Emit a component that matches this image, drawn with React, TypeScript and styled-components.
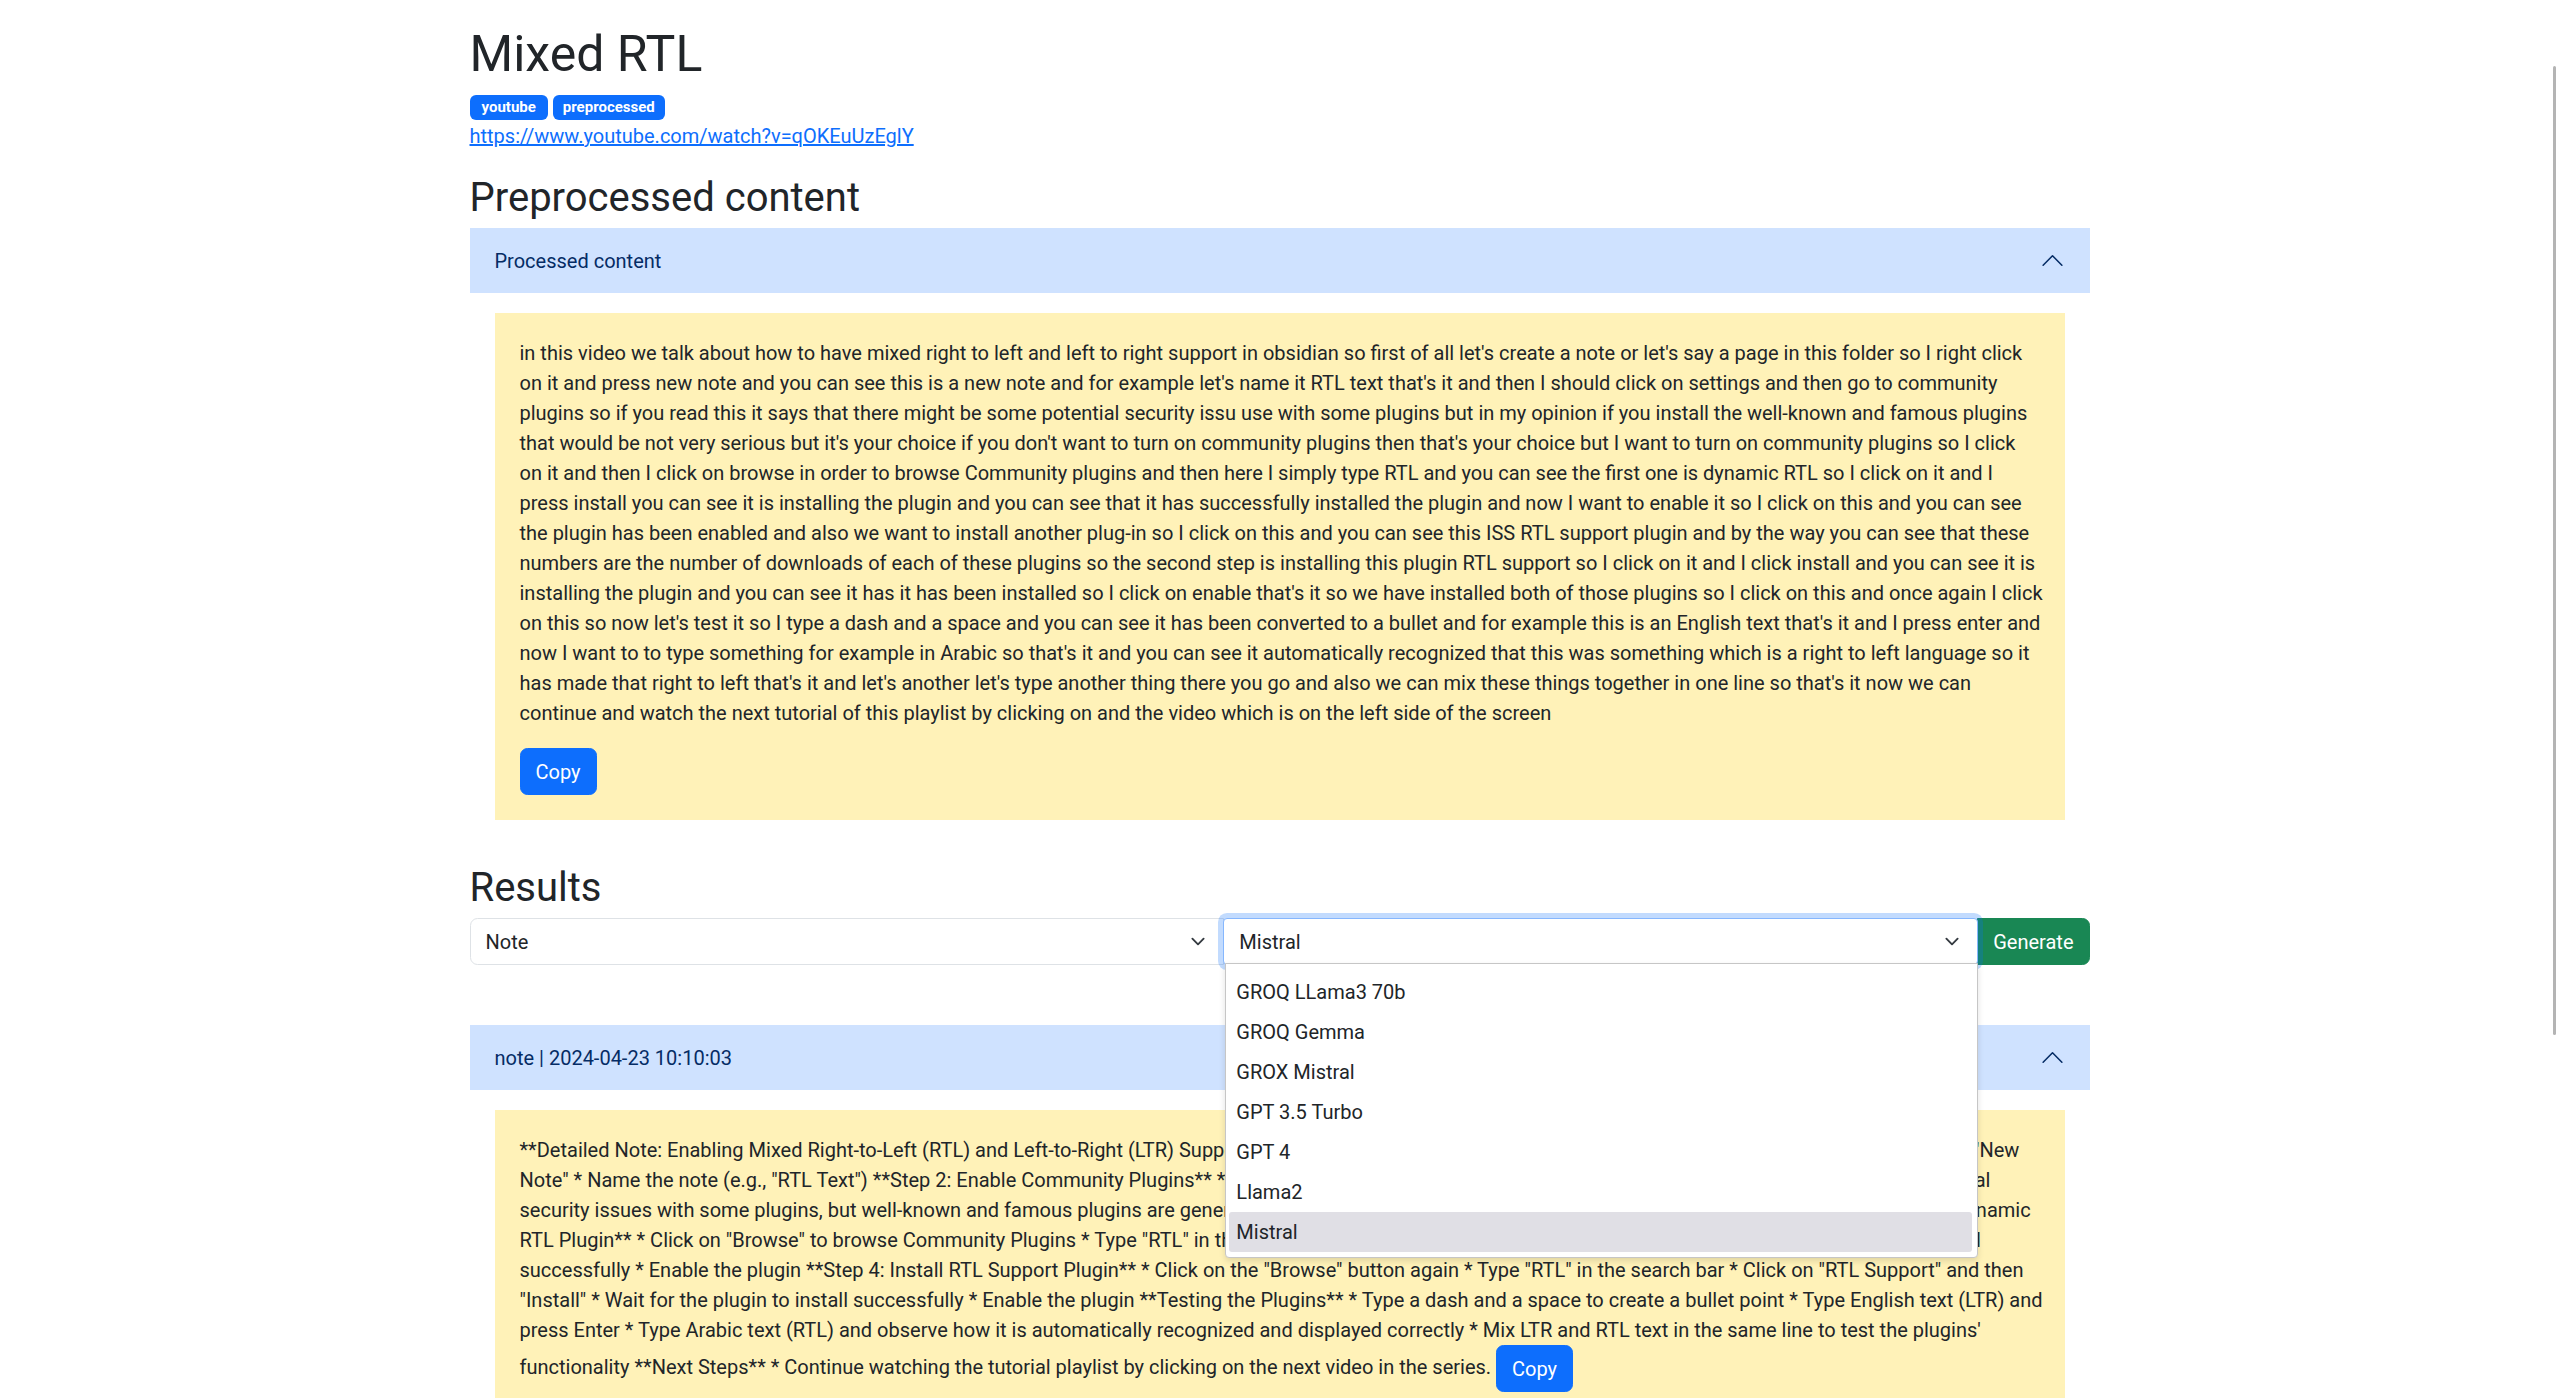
import React from 'react';
import styled, { createGlobalStyle } from 'styled-components';

const GlobalStyle = createGlobalStyle`
  *, *::before, *::after { box-sizing: border-box; }
  html { overflow: hidden; }
  body {
    margin: 0;
    font-family: Roboto, "Liberation Sans", Arial, sans-serif;
    font-size: 20px;
    line-height: 1.5;
    color: #212529;
    background: #ffffff;
  }
`;

const Page = styled.main`
  max-width: 1650px;
  margin: 0 auto;
  padding: 24px 15px 0;
`;

const Title = styled.h1`
  margin: 0 0 11px;
  font-size: 50px;
  line-height: 60px;
  font-weight: 400;
`;

const TagRow = styled.div`
  display: flex;
  gap: 5px;
  height: 25px;
`;

const Badge = styled.span<{ $pad: number }>`
  display: inline-flex;
  align-items: center;
  height: 25px;
  padding: 0 ${(p) => p.$pad}px;
  border-radius: 6px;
  background: #0d6efd;
  color: #fff;
  font-size: 15px;
  font-weight: 700;
  line-height: 1;
`;

const SourceLink = styled.a`
  display: inline-block;
  margin-top: 1px;
  line-height: 30px;
  color: #0d6efd;
  text-decoration: underline;
`;

const SectionTitle = styled.h2<{ $top: number; $bottom: number }>`
  margin: ${(p) => p.$top}px 0 ${(p) => p.$bottom}px;
  font-size: 40px;
  line-height: 48px;
  font-weight: 400;
`;

const AccordionHeader = styled.div`
  display: flex;
  align-items: center;
  justify-content: space-between;
  height: 65px;
  padding: 0 25px;
  background: #cfe2ff;
  color: #052c65;
  font-size: 20px;
  line-height: 24px;
`;

const AccordionBody = styled.div`
  padding: 20px 25px;
`;

const NoteCard = styled.div`
  padding: 25px;
  background: #fff2b8;
`;

const Paragraph = styled.p`
  margin: 0 0 20px;
  line-height: 30px;
  white-space: nowrap;
`;

const InlineText = styled.div`
  line-height: 30px;
  white-space: nowrap;
`;

const PrimaryButton = styled.button`
  display: inline-block;
  vertical-align: middle;
  padding: 7.5px 15px;
  border: 1px solid #0d6efd;
  border-radius: 7.5px;
  background: #0d6efd;
  color: #fff;
  font-family: inherit;
  font-size: 20px;
  line-height: 30px;
  cursor: pointer;
`;

const ControlRow = styled.div`
  display: flex;
  height: 47px;
`;

const SelectBox = styled.div<{ $focused?: boolean; $first?: boolean }>`
  position: relative;
  flex: 1 1 0;
  display: flex;
  align-items: center;
  justify-content: space-between;
  margin-left: ${(p) => (p.$first ? 0 : -1)}px;
  padding: 0 15px 0 15px;
  border: 1px solid ${(p) => (p.$focused ? '#86b7fe' : '#dee2e6')};
  border-radius: ${(p) => (p.$first ? '7.5px 0 0 7.5px' : '4px')};
  box-shadow: ${(p) => (p.$focused ? '0 0 0 5px rgba(13, 110, 253, 0.25)' : 'none')};
  z-index: ${(p) => (p.$focused ? 3 : 1)};
  background: #fff;
  color: #212529;
  line-height: 30px;
`;

const GenerateButton = styled.button`
  margin-left: -1px;
  padding: 7.5px 15px;
  border: 1px solid #198754;
  border-radius: 0 7.5px 7.5px 0;
  background: #198754;
  color: #fff;
  font-family: inherit;
  font-size: 20px;
  line-height: 30px;
  z-index: 2;
`;

const OptionList = styled.ul`
  position: absolute;
  top: calc(100% - 1px);
  left: 1px;
  right: -1px;
  margin: 0;
  padding: 8px 5px 5px 3px;
  list-style: none;
  background: #fff;
  border: 1px solid #c6c6c6;
  border-radius: 0 0 4px 4px;
  box-shadow: 0 3px 6px rgba(0, 0, 0, 0.12);
  z-index: 10;
`;

const OptionItem = styled.li<{ $active?: boolean }>`
  height: 40px;
  padding: 0 7px;
  line-height: 40px;
  border-radius: 3px;
  background: ${(p) => (p.$active ? '#e0dfe5' : 'transparent')};
  color: #212529;
  font-size: 20px;
`;

const ResultsSpacer = styled.div`
  height: 60px;
`;

const ScrollThumb = styled.div`
  position: fixed;
  top: 66px;
  right: 3px;
  width: 3px;
  height: 969px;
  border-radius: 2px;
  background: #b4b4b4;
`;

const SelectChevron = () => (
  <svg width="20" height="15" viewBox="0 0 16 16" fill="none" stroke="#343a40" strokeWidth="2" strokeLinecap="round" strokeLinejoin="round">
    <path d="M2 5l6 6 6-6" />
  </svg>
);

const AccordionChevron = () => (
  <svg width="25" height="25" viewBox="0 0 16 16" fill="none" stroke="#052c65" strokeWidth="1" strokeLinecap="round" strokeLinejoin="round">
    <path d="M2 11L8 5L14 11" />
  </svg>
);

const transcriptLines = [
  "in this video we talk about how to have mixed right to left and left to right support in obsidian so first of all let's create a note or let's say a page in this folder so I right click",
  "on it and press new note and you can see this is a new note and for example let's name it RTL text that's it and then I should click on settings and then go to community",
  'plugins so if you read this it says that there might be some potential security issu use with some plugins but in my opinion if you install the well-known and famous plugins',
  "that would be not very serious but it's your choice if you don't want to turn on community plugins then that's your choice but I want to turn on community plugins so I click",
  'on it and then I click on browse in order to browse Community plugins and then here I simply type RTL and you can see the first one is dynamic RTL so I click on it and I',
  'press install you can see it is installing the plugin and you can see that it has successfully installed the plugin and now I want to enable it so I click on this and you can see',
  'the plugin has been enabled and also we want to install another plug-in so I click on this and you can see this ISS RTL support plugin and by the way you can see that these',
  'numbers are the number of downloads of each of these plugins so the second step is installing this plugin RTL support so I click on it and I click install and you can see it is',
  "installing the plugin and you can see it has it has been installed so I click on enable that's it so we have installed both of those plugins so I click on this and once again I click",
  "on this so now let's test it so I type a dash and a space and you can see it has been converted to a bullet and for example this is an English text that's it and I press enter and",
  "now I want to to type something for example in Arabic so that's it and you can see it automatically recognized that this was something which is a right to left language so it",
  "has made that right to left that's it and let's another let's type another thing there you go and also we can mix these things together in one line so that's it now we can",
  'continue and watch the next tutorial of this playlist by clicking on and the video which is on the left side of the screen',
];

const noteLines = [
  '**Detailed Note: Enabling Mixed Right-to-Left (RTL) and Left-to-Right (LTR) Support in Obsidian** **Step 1: Create a New Note** * Right-click on the folder and select "New',
  'Note" * Name the note (e.g., "RTL Text") **Step 2: Enable Community Plugins** * Go to Settings and click on the Community Plugins * Read the warning about potential',
  'security issues with some plugins, but well-known and famous plugins are generally safe, and not a serious concern * Turn on Community Plugins **Step 3: Install Dynamic',
  'RTL Plugin** * Click on "Browse" to browse Community Plugins * Type "RTL" in the search bar * Click on "Dynamic RTL" and then "Install" * Wait for the plugin to install',
  'successfully * Enable the plugin **Step 4: Install RTL Support Plugin** * Click on the "Browse" button again * Type "RTL" in the search bar * Click on "RTL Support" and then',
  '"Install" * Wait for the plugin to install successfully * Enable the plugin **Testing the Plugins** * Type a dash and a space to create a bullet point * Type English text (LTR) and',
  "press Enter * Type Arabic text (RTL) and observe how it is automatically recognized and displayed correctly * Mix LTR and RTL text in the same line to test the plugins'",
  'functionality **Next Steps** * Continue watching the tutorial playlist by clicking on the next video in the series.',
];

const models = ['GROQ LLama3 70b', 'GROQ Gemma', 'GROX Mistral', 'GPT 3.5 Turbo', 'GPT 4', 'Llama2', 'Mistral'];

const withBreaks = (lines: string[]) =>
  lines.map((line, i) => (
    <React.Fragment key={i}>
      {line}
      {i < lines.length - 1 ? <br /> : null}
    </React.Fragment>
  ));

export default function App() {
  return (
    <>
      <GlobalStyle />
      <Page>
        <Title>Mixed RTL</Title>
        <TagRow>
          <Badge $pad={12}>youtube</Badge>
          <Badge $pad={10}>preprocessed</Badge>
        </TagRow>
        <SourceLink href="#">https://www.youtube.com/watch?v=qOKEuUzEglY</SourceLink>

        <SectionTitle $top={23} $bottom={6}>Preprocessed content</SectionTitle>
        <section>
          <AccordionHeader>
            <span>Processed content</span>
            <AccordionChevron />
          </AccordionHeader>
          <AccordionBody>
            <NoteCard>
              <Paragraph>{withBreaks(transcriptLines)}</Paragraph>
              <PrimaryButton>Copy</PrimaryButton>
            </NoteCard>
          </AccordionBody>
        </section>

        <SectionTitle $top={24} $bottom={6}>Results</SectionTitle>
        <ControlRow>
          <SelectBox $first>
            <span>Note</span>
            <SelectChevron />
          </SelectBox>
          <SelectBox $focused>
            <span>Mistral</span>
            <SelectChevron />
            <OptionList>
              {models.map((m) => (
                <OptionItem key={m} $active={m === 'Mistral'}>
                  {m}
                </OptionItem>
              ))}
            </OptionList>
          </SelectBox>
          <GenerateButton>Generate</GenerateButton>
        </ControlRow>
        <ResultsSpacer />

        <section>
          <AccordionHeader>
            <span>note | 2024-04-23 10:10:03</span>
            <AccordionChevron />
          </AccordionHeader>
          <AccordionBody>
            <NoteCard>
              <InlineText>
                {withBreaks(noteLines)} <PrimaryButton>Copy</PrimaryButton>
              </InlineText>
            </NoteCard>
          </AccordionBody>
        </section>
      </Page>
      <ScrollThumb />
    </>
  );
}
